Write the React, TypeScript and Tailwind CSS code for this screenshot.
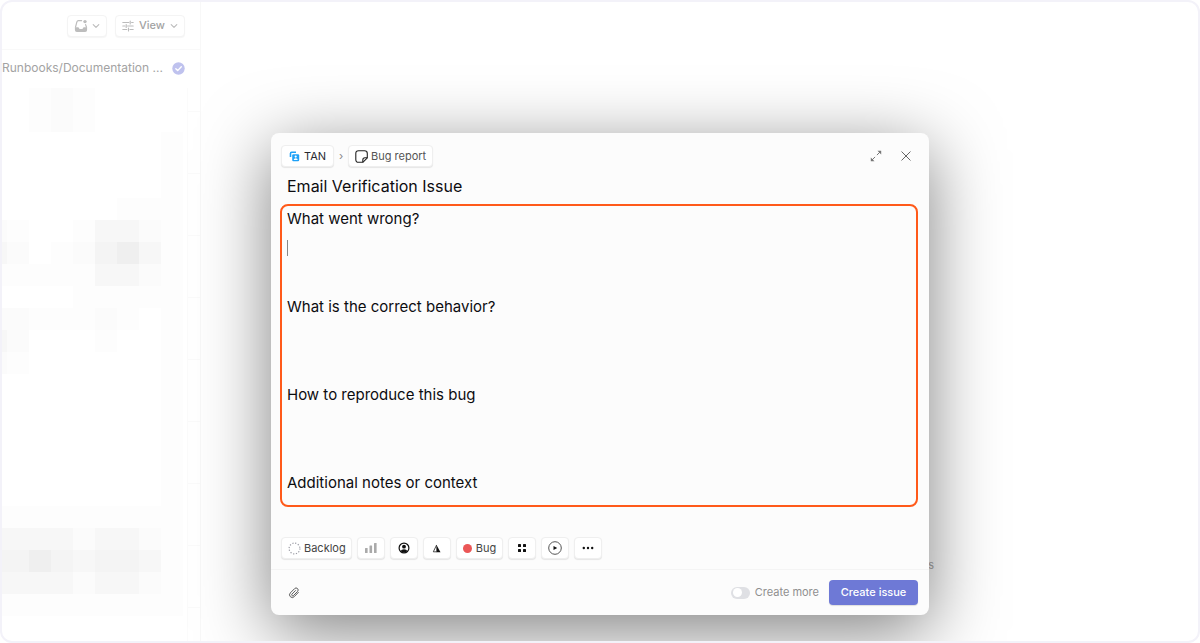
import React, { useState } from "react";

// one character per cell, 0 = lightest
const mosaicRows = [
  "001210000",
  "001210000",
  "000000001",
  "000000001",
  "000000001",
  "000000111",
  "210013321",
  "320124531",
  "111113321",
  "000011111",
  "221112101",
  "320001001",
  "210000001",
  "000000001",
  "000000001",
  "000000001",
  "000000001",
  "000000001",
  "000000001",
  "111111111",
  "333323321",
  "445434431",
  "333323321",
  "111111111",
];

const shades: Record<string, string> = {
  "0": "bg-white",
  "1": "bg-[#fdfdfd]",
  "2": "bg-[#fbfbfb]",
  "3": "bg-[#f7f7f7]",
  "4": "bg-[#f4f4f4]",
  "5": "bg-[#efefef]",
};

const chip =
  "flex h-[22px] items-center rounded border border-[#efefef] bg-white shadow-[0_1px_1px_rgba(0,0,0,0.09)]";
const iconChip = chip + " w-7 justify-center";
const fadedChip =
  "flex h-[22px] items-center justify-center rounded border border-[#f4f4f4] bg-white shadow-[0_1px_1px_rgba(0,0,0,0.04)]";

function Chevron() {
  return (
    <svg width="8" height="8" viewBox="0 0 8 8" fill="none" stroke="#bbb" strokeWidth="1.1" strokeLinecap="round" strokeLinejoin="round">
      <path d="M1.2 2.6 4 5.4 6.8 2.6" />
    </svg>
  );
}

function Sidebar() {
  return (
    <aside className="flex w-[199px] shrink-0 flex-col border-r border-[#f8f8f8]">
      <div className="flex h-12 shrink-0 items-center justify-end gap-2 border-b border-[#f9f9f9] pr-[15px]">
        <button aria-label="Inbox" className={fadedChip + " w-10 gap-1"}>
          <svg width="14" height="14" viewBox="0 0 14 14" fill="none">
            <path d="M7.600 1.700H4.400Q3.200 1.700 2.900 2.900L1.500 8.200M11.600 5.600l.9 2.600" stroke="#bdbdbd" strokeWidth="1.200" strokeLinecap="round" />
            <path d="M.9 8.300h3.300q.5 0 .7.600.4 1.200 2.100 1.200t2.100-1.200q.2-.6.7-.6h3.300v2.700q0 2-2 2H2.900q-2 0-2-2z" fill="#bdbdbd" />
            <circle cx="11" cy="2.600" r="1.700" fill="#bdbdbd" />
          </svg>
          <Chevron />
        </button>
        <button className={fadedChip + " w-[70px] gap-[5px] text-[11px] font-medium text-[#a3a3a3]"}>
          <svg width="12" height="12" viewBox="0 0 12 12" fill="none" stroke="#bbb" strokeWidth="1.1" strokeLinecap="round">
            <path d="M.8 2.500h6M9.600 2.500h1.600M.8 6h2M5.600 6h5.600M.8 9.500h4M8 9.500h3.200M8.200 1v3M4.200 4.500v3M6.500 8v3" />
          </svg>
          View
          <Chevron />
        </button>
      </div>
      <div className="mb-0.5 flex h-9 shrink-0 items-center justify-between pr-[15px]">
        <span className="whitespace-nowrap text-xs text-[#a3a3a3]">Runbooks/Documentation ...</span>
        <svg width="13" height="13" viewBox="0 0 13 13" className="shrink-0">
          <circle cx="6.5" cy="6.5" r="6.2" fill="#bfc2ee" />
          <path d="M3.800 6.700 5.700 8.600 9.300 4.700" fill="none" stroke="#fff" strokeWidth="1.4" strokeLinecap="round" strokeLinejoin="round" />
        </svg>
      </div>
      <div className="flex min-h-0 flex-1 justify-between">
        <div>
          {mosaicRows.map((row, r) => (
            <div key={r} className="flex">
              {row.split("").map((c, i) => (
                <div key={i} className={(i === 0 ? "h-[22px] w-[5px] " : "h-[22px] w-[22px] ") + shades[c]} />
              ))}
            </div>
          ))}
        </div>
        <div className="w-[13px] border-l border-[#fbfbfb] pt-[23px]">
          {[1, 2, 3, 4, 5, 6, 7, 8, 9].map((n) => (
            <div key={n} className="h-[62px] border-t border-[#fafafa]" />
          ))}
        </div>
      </div>
    </aside>
  );
}

const questions = [
  { id: "wrong", label: "What went wrong?" },
  { id: "correct", label: "What is the correct behavior?" },
  { id: "reproduce", label: "How to reproduce this bug" },
  { id: "notes", label: "Additional notes or context" },
];

function IssueDialog() {
  const [title, setTitle] = useState("Email Verification Issue");
  const [more, setMore] = useState(false);

  return (
    <form
      role="dialog"
      aria-label="New issue"
      onSubmit={(e) => e.preventDefault()}
      className="w-[658px] max-w-full rounded-lg bg-[#fcfcfc] shadow-[0_16px_70px_rgba(0,0,0,0.5)]"
    >
      <div className="pb-[10px] pl-[9px] pr-[11px] pt-3">
        <div className="flex h-[22px] items-center pl-px text-[11px]">
          <button type="button" className={chip + " gap-1 px-[7px] text-[#282a30]"}>
            <svg width="11" height="11" viewBox="0 0 11 11" fill="none">
              <path d="M1.500 6V2.400Q1.500 1.300 2.600 1.300H7" stroke="#1ea1f7" strokeWidth="1.6" />
              <rect x="3.200" y="3.200" width="7" height="7" rx="1.200" fill="#1ea1f7" />
              <circle cx="6.700" cy="5.600" r="1.100" fill="#fff" />
              <path d="M4.700 9q0-1.700 2-1.700t2 1.700z" fill="#fff" />
            </svg>
            TAN
          </button>
          <span className="w-[14px] text-center text-[#888]">›</span>
          <button type="button" className={chip + " gap-[3px] px-[6px] text-[#555]"}>
            <svg width="13" height="13" viewBox="0 0 13 13" fill="none" stroke="#222" strokeWidth="1.1" strokeLinejoin="round">
              <path d="M7.800 12.300H3.500Q.8 12.300.8 9.500v-6Q.8.8 3.500.8h6q2.800 0 2.800 2.700v4.300z" />
              <path d="M7.800 12.300v-2.300q0-2.200 2.200-2.200h2.300" />
            </svg>
            Bug report
          </button>
          <button type="button" aria-label="Expand" className="ml-auto mr-[19px]">
            <svg width="12" height="12" viewBox="0 0 12 12" fill="none" stroke="#777" strokeWidth="1">
              <path d="M6.900 5.100 10.500 1.500M5.100 6.900 1.500 10.500" />
              <path d="M7.500.8h3.700v3.700zM4.500 11.200H.8V7.500z" fill="#777" stroke="none" />
            </svg>
          </button>
          <button type="button" aria-label="Close" className="mr-[7px]">
            <svg width="10" height="10" viewBox="0 0 10 10" stroke="#666" strokeWidth="1" strokeLinecap="round">
              <path d="M.8.8 9.200 9.200M9.200.8.8 9.200" />
            </svg>
          </button>
        </div>

        <input
          aria-label="Issue title"
          value={title}
          onChange={(e) => setTitle(e.target.value)}
          className="block h-[37px] w-full bg-transparent pl-[7px] text-base text-[#0c0c10] outline-none"
        />

        <div className="rounded-lg border-2 border-[#ff5a1a] px-[5px] text-[15px] text-[#0c0c10]">
          {questions.map((q, i) => (
            <div key={q.id} className="relative">
              <label htmlFor={q.id} className="block leading-[26px]">{q.label}</label>
              <textarea
                id={q.id}
                className={(i === 3 ? "h-[9px]" : "h-[62px]") + " block w-full resize-none bg-transparent leading-[29px] outline-none"}
              />
              {i === 0 && <span className="absolute left-0 top-[34px] h-4 w-px bg-[#888]" />}
            </div>
          ))}
        </div>

        <div className="mt-[30px] flex gap-[5px] pl-px text-[11px] text-[#444]">
          <button type="button" className={chip + " gap-[3px] pl-[6px] pr-[5px]"}>
            <svg width="13" height="13" viewBox="0 0 13 13" fill="none">
              <circle cx="6.5" cy="6.5" r="5.400" stroke="#999aa3" strokeWidth="1.200" strokeDasharray="1.200 1.628" />
            </svg>
            Backlog
          </button>
          <button type="button" aria-label="Priority" className={iconChip}>
            <svg width="12" height="12" viewBox="0 0 12 12" fill="#aaa">
              <rect x="0" y="6" width="2.600" height="5" rx=".5" />
              <rect x="4.500" y="3.500" width="2.600" height="7.500" rx=".5" />
              <rect x="9" y="1" width="2.600" height="10" rx=".5" />
            </svg>
          </button>
          <button type="button" aria-label="Assignee" className={iconChip}>
            <svg width="12" height="12" viewBox="0 0 12 12" fill="none">
              <circle cx="6" cy="6" r="4.900" stroke="#111" strokeWidth="1.200" />
              <circle cx="6" cy="4.700" r="1.900" fill="#111" />
              <path d="M2.600 9q.8-1.700 3.400-1.700T9.400 9Q8 10.600 6 10.600T2.600 9z" fill="#111" />
            </svg>
          </button>
          <button type="button" aria-label="Estimate" className={iconChip}>
            <svg width="9" height="9" viewBox="0 0 9 9">
              <path d="M4.600 1 1.300 7.800h3.300" fill="none" stroke="#222" strokeWidth=".8" />
              <path d="M4.400.8 8.500 8.200H4.400z" fill="#111" />
            </svg>
          </button>
          <button type="button" className={chip + " gap-1 px-[6px]"}>
            <span className="h-[9px] w-[9px] rounded-full bg-[#eb5757]" />
            Bug
          </button>
          <button type="button" aria-label="Project" className={iconChip}>
            <svg width="10" height="10" viewBox="0 0 10 10" fill="#111">
              <rect x="1" y="1" width="3" height="3" rx=".6" />
              <rect x="6" y="1" width="3" height="3" rx=".6" />
              <rect x="1" y="6" width="3" height="3" rx=".6" />
              <rect x="6" y="6" width="3" height="3" rx=".6" />
            </svg>
          </button>
          <button type="button" aria-label="Cycle" className={iconChip}>
            <svg width="14" height="14" viewBox="0 0 14 14" fill="none">
              <circle cx="7" cy="7" r="6.300" stroke="#555" strokeWidth="1" />
              <path d="M5.500 4.900v4.200L9.200 7z" fill="#111" />
            </svg>
          </button>
          <button type="button" aria-label="More" className={iconChip}>
            <svg width="12" height="4" viewBox="0 0 12 4" fill="#111">
              <circle cx="1.800" cy="2" r="1.200" />
              <circle cx="6" cy="2" r="1.200" />
              <circle cx="10.200" cy="2" r="1.200" />
            </svg>
          </button>
        </div>
      </div>

      <div className="flex h-[46px] items-center border-t border-[#f4f4f4] pl-[17px] pr-[11px] text-[11px]">
        <button type="button" aria-label="Attach file">
          <svg width="12" height="12" viewBox="0 0 16 16" fill="none" stroke="#555" strokeWidth="1.300" strokeLinecap="round">
            <path d="M13.800 7.200 8.300 12.900a3.500 3.500 0 0 1-5.200-5L8.800 2.200a2.600 2.600 0 0 1 4 3.700L7.300 11.400a1.300 1.300 0 0 1-2-1.900L10 4.800" />
          </svg>
        </button>
        <label className="ml-auto flex items-center gap-[5px] text-[#8f8f8f]">
          <input type="checkbox" checked={more} onChange={(e) => setMore(e.target.checked)} className="peer sr-only" />
          <span className="flex h-3 w-[19px] items-center rounded-full bg-[#dfe0e4] px-0.5 peer-checked:justify-end">
            <span className="h-[9px] w-[9px] rounded-full bg-white" />
          </span>
          Create more
        </label>
        <button type="submit" className="ml-[10px] h-[25px] w-[89px] rounded bg-[#6e79d6] font-medium text-white shadow-[0_1px_1px_rgba(0,0,0,0.12)]">
          Create issue
        </button>
      </div>
    </form>
  );
}

export default function App() {
  return (
    <div className="relative flex h-screen overflow-hidden rounded-xl border-2 border-[#f3f2f9] bg-white font-['Inter',sans-serif]">
      <Sidebar />
      <main className="flex-1">
        <span className="absolute right-[264px] top-[555px] text-[11px] text-[#aaa]">s</span>
      </main>
      <div className="absolute inset-0 flex items-start justify-center pt-[131px]">
        <IssueDialog />
      </div>
    </div>
  );
}
